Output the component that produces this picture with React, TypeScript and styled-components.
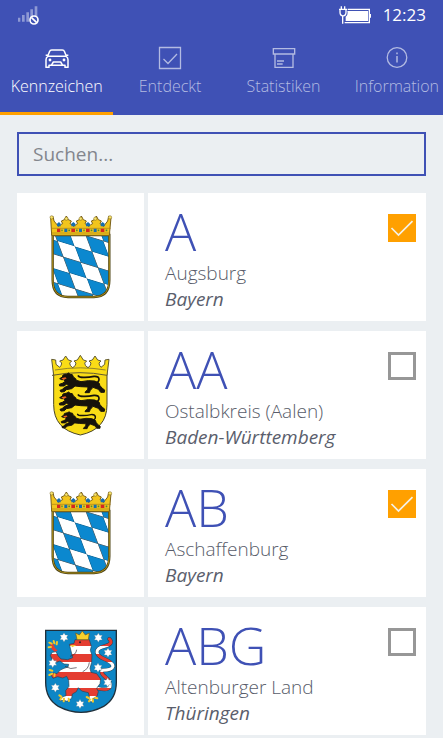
import React, { useState } from "react";
import styled, { createGlobalStyle } from "styled-components";

const indigo = "#3f51b5";
const amber = "#ffa000";

const GlobalStyle = createGlobalStyle`
  *, *::before, *::after { box-sizing: border-box; }
  body {
    margin: 0;
    background: #ebeff2;
    font-family: "Open Sans", "Noto Sans", sans-serif;
    overflow-x: hidden;
  }
  button, input { font: inherit; }
`;

const Header = styled.header`
  background: ${indigo};
  color: #fff;
`;

const StatusBar = styled.div`
  display: flex;
  align-items: center;
  justify-content: space-between;
  height: 30px;
  padding: 0 17px;
`;

const StatusRight = styled.div`
  display: flex;
  align-items: center;
  gap: 12px;
  svg { display: block; }
`;

const Clock = styled.time`
  font-size: 17px;
  line-height: 28px;
  font-weight: 400;
`;

const Tabs = styled.nav`
  display: flex;
  overflow: hidden;
`;

const Tab = styled.button<{ $active: boolean }>`
  flex: 0 0 25.6%;
  display: flex;
  flex-direction: column;
  align-items: center;
  height: 85px;
  padding: 15px 0 0;
  border: 0;
  border-bottom: 3px solid ${(p) => (p.$active ? amber : "transparent")};
  background: none;
  color: ${(p) => (p.$active ? "#ffffff" : "#b3bbe2")};
  font-size: 16px;
  line-height: 24px;
  font-weight: 300;
  white-space: nowrap;
  cursor: pointer;
`;

const TabIcon = styled.span`
  display: grid;
  place-items: center;
  height: 26px;
  margin-bottom: 3px;
  svg { display: block; }
`;

const Main = styled.main`
  padding: 17px 17px 2px;
`;

const Search = styled.input`
  display: block;
  width: 100%;
  height: 44px;
  padding: 0 14px;
  border: 2px solid ${indigo};
  border-radius: 0;
  outline: 0;
  background: transparent;
  color: #5b5f6b;
  font-size: 19px;
  &::placeholder { color: #83868d; opacity: 1; }
`;

const List = styled.ul`
  display: flex;
  flex-direction: column;
  gap: 10px;
  margin: 17px 0 0;
  padding: 0;
  list-style: none;
`;

const Row = styled.li`
  display: grid;
  grid-template-columns: 127px 1fr;
  gap: 4px;
  min-height: 128px;
`;

const Crest = styled.div`
  display: grid;
  place-items: center;
  background: #fff;
  svg { display: block; }
`;

const Card = styled.div`
  display: flex;
  justify-content: space-between;
  align-items: flex-start;
  padding: 9px 10px 9px 17px;
  background: #fff;
`;

const Code = styled.h2`
  margin: 0;
  color: ${indigo};
  font-size: 52px;
  line-height: 58px;
  font-weight: 300;
`;

const Place = styled.p`
  margin: 0;
  color: #585c6a;
  font-size: 19px;
  line-height: 26px;
  font-weight: 300;
`;

const State = styled(Place)`
  color: #5a5e6c;
  font-style: italic;
  font-weight: 400;
`;

const CheckWrap = styled.label`
  display: grid;
  margin-top: 12px;
  cursor: pointer;
  & > * { grid-area: 1 / 1; }
  svg { display: block; pointer-events: none; }
`;

const CheckInput = styled.input`
  appearance: none;
  width: 28px;
  height: 28px;
  margin: 0;
  border: 3px solid #979797;
  background: #fff;
  cursor: pointer;
  &:checked { border-color: ${amber}; background: ${amber}; }
`;

const SignalIcon = () => (
  <svg width="22" height="20" viewBox="51 16 66 60" aria-label="Kein Netz">
    <g fill="#8e99d4">
      <path d="M54 54h7v12h-7zM66 46h8v20h-8zM79 38h8v28h-8zM91 29h8v37h-8zM104 20h8v46h-8z" />
    </g>
    <circle cx="102" cy="61" r="12" fill={indigo} stroke="#fff" strokeWidth="5" />
    <path d="M94 53l16 16" stroke="#fff" strokeWidth="5" />
  </svg>
);

const BatteryIcon = () => (
  <svg width="32" height="18" viewBox="358 14 96 54" aria-label="Akku wird geladen">
    <path d="M384 24h65v40h-74" fill="none" stroke="#fff" strokeWidth="4" />
    <path d="M383 29h62v30h-67v-13c5-3 7-9 5-17z" fill="#fff" />
    <path d="M450 38h5v11h-5z" fill="#fff" />
    <path d="M365 15v9M375 15v9M369 44v23" stroke="#fff" strokeWidth="4" />
    <path d="M358 24h24M361 24v9c0 14 18 14 18 0v-9" fill={indigo} stroke="#fff" strokeWidth="4" />
  </svg>
);

const CarIcon = () => (
  <svg width="24" height="20" viewBox="136 146 72 60" fill="none" stroke="currentColor" strokeWidth="4.5" strokeLinejoin="round">
    <path d="M144 171l6-15q1-4 6-4h32q5 0 6 4l6 15" />
    <path d="M138 168h7M199 168h7M145 171h54q6 3 6 10v23h-9v-6h-48v6h-9v-23q0-7 6-10z" />
    <path d="M155 198l6-10h22l6 10" />
    <circle cx="151" cy="182" r="2" fill="currentColor" />
    <circle cx="193" cy="182" r="2" fill="currentColor" />
  </svg>
);

const CheckBoxIcon = () => (
  <svg width="24" height="24" viewBox="0 0 24 24" fill="none" stroke="currentColor">
    <path d="M1.5 1.5h21v21h-21z" strokeWidth="1.3" />
    <path d="M5.500 13l4.500 4.500 9-9.500" strokeWidth="1.3" />
  </svg>
);

const ArchiveIcon = () => (
  <svg width="24" height="24" viewBox="154 136 72 72" fill="none" stroke="currentColor" strokeWidth="4">
    <path d="M158 144h64v16h-64zM163 160v40h54v-40M169 181h21M169 190h17" />
  </svg>
);

const InfoIcon = () => (
  <svg width="24" height="24" viewBox="0 0 24 24" fill="none" stroke="currentColor" strokeWidth="1.3">
    <circle cx="12" cy="11.500" r="9.800" />
    <path d="M12 10v6.500M12 6.500v1.700" strokeWidth="1.500" />
  </svg>
);

const Tick = () => (
  <svg width="28" height="28" viewBox="0 0 28 28" fill="none" stroke="#f4f1e8" strokeWidth="1.700">
    <path d="M3.500 14l7 7L24.500 7.200" />
  </svg>
);

const BavariaCrest = ({ id }: { id: string }) => (
  <svg width="64" height="84" viewBox="55 58 192 252" role="img" aria-label="Wappen Bayern">
    <defs>
      <pattern id={id} width="2" height="2" patternUnits="userSpaceOnUse" patternTransform="matrix(52 16 18 48 132 152)">
        <path d="M0 0h2v2H0z" fill="#fff" />
        <path d="M0 0h1v1H0zM1 1h1v1H1z" fill="#0b88cf" stroke="#30464f" strokeWidth=".04" />
      </pattern>
    </defs>
    <path d="M66 118h170v136q0 50-46 50h-78q-46 0-46-50z" fill={`url(#${id})`} stroke="#4e4415" strokeWidth="7" />
    <path d="M66 118h170v136q0 50-46 50h-78q-46 0-46-50z" fill="none" stroke="#a98c18" strokeWidth="3" />
    <path d="M63 119L60 66l7-4 3 14 14 17q6-8 12-9l-4-8 9-4 6-11 6 11 9 4-4 8q7 2 11 9 5-7 12-9l-4-8 9-4 6-11 6 11 9 4-4 8q7 2 11 9 5-7 12-9l-4-8 9-4 6-11 6 11 9 4-4 8q6 2 10 9l13-17 3-14 7 4-5 53z" fill="#f2c51d" stroke="#79601a" strokeWidth="3" strokeLinejoin="round" />
    <path d="M62 98h178M63 112h176" stroke="#a77d16" strokeWidth="2" />
    <g fill="#176eae">
      <path d="M101 99h9v10h-9zM145 99h9v10h-9zM189 99h9v10h-9z" />
      <path d="M79 84l6-5 5 5v8H79zM122 84l6-5 6 5v8h-12zM166 84l6-5 6 5v8h-12zM210 84l6-5 6 5v8h-12z" />
    </g>
    <path d="M79 99h10v10H79zM122 99h11v10h-11zM166 99h11v10h-11zM210 99h11v10h-11z" fill="#d5271e" />
    <path d="M92 104h4M113 104h5M136 104h5M158 104h4M180 104h5M201 104h5M225 104h5" stroke="#4f8a34" strokeWidth="5" />
    <g fill="#f7e36c" stroke="#79601a" strokeWidth="1.500">
      <circle cx="63" cy="65" r="5" /><circle cx="107" cy="69" r="5" /><circle cx="150" cy="69" r="5" /><circle cx="194" cy="69" r="5" /><circle cx="238" cy="65" r="5" />
    </g>
  </svg>
);

const lionPath =
  "M88 130l8-5 2-6 12-3 5-3 4 4 7 1 3 7 7 5 2 5 14 4 22-3 19 1 13 6 3 8 7 8 7 5-1 7-11 0-7-9-16-6-8 9-3 7-13 0 3-5 5-3 1-9-22-1-17-2-10 8-16 3-6 6-10 1-3-5 6-2 8-7 14-6-9-3-7 5-13 0-1-5 9-3 8-5-3-6-7 0z";

const BadenCrest = () => (
  <svg width="64" height="84" viewBox="56 54 192 252" role="img" aria-label="Wappen Baden-Württemberg">
    <path d="M70 103q80-10 160 0v106q0 74-80 91-80-17-80-91z" fill="#f9dc16" stroke="#494526" strokeWidth="3" />
    <path d="M70 121L64 73l12 2 1 13 11 9q6-6 6-13l-6-6 10-3 8-12 8 12 10 3-6 6q0 9 9 14 10-5 10-14l-6-6 10-3 9-14 9 14 10 3-6 6q0 9 10 14 9-5 9-14l-6-6 10-3 8-12 8 12 10 3-6 6q0 7 6 13l11-9 1-13 12-2-6 48q-80-16-164 0z" fill="#f9dc16" stroke="#625b32" strokeWidth="3" strokeLinejoin="round" />
    <path d="M74 105q76-13 152 0" fill="none" stroke="#625b32" strokeWidth="2" />
    {["translate(0 1)", "translate(0 58)", "translate(18 133) scale(.86)"].map((t) => (
      <g key={t} transform={t}>
        <path d={lionPath} fill="#17130b" stroke="#17130b" strokeWidth="3" strokeLinejoin="round" />
        <path d="M190 145q17-3 16-14-1-9-15-8-15 3-27 3-17 1-20-4" fill="none" stroke="#17130b" strokeWidth="5" strokeLinecap="round" />
        <path d="M93 129l12-3 4 3-9 5z" fill="#ee6325" />
      </g>
    ))}
  </svg>
);

const stripeEdges = [62, 110, 134, 158, 187, 212, 236, 259, 310];
const stars = [[102, 83], [205, 84], [234, 129], [68, 160], [204, 174], [76, 234], [233, 218], [150, 283]];
const thuringiaTail = "M238 88q14 14-12 21-26 6-25 19 2 12 22 20 25 10 26 22-2 12-33 12-4 10 10 20 18 14 14 29-7 13-36 5";
const thuringiaLion =
  "M118 104l14-3 3-11 43 0 6 20-3 12 5 14-1 22-5 18 3 12 17 4 12 16-2 14-10 14 5 10-4 14-11 6-4 11-10-2 2-14-3-12-20-5-10-10-6 12-12 7-2 13-14 9-9-3-11 1-3-6 14-7 6-2-1-15 10-13-1-18-6-12-12 5-15-4-14 5-6-10 7-6 11 2 10-11 11-5 12-4 2-8-14-1-12-9-14 5-9-8-6-14 6-9 11-2 6 12 9 10 20 2 15-6z";

const ThuringiaCrest = () => (
  <svg width="72" height="84" viewBox="45 58 216 252" role="img" aria-label="Wappen Thüringen">
    <defs>
      <linearGradient id="stripes" gradientUnits="userSpaceOnUse" x1="0" y1="62" x2="0" y2="310">
        {stripeEdges.slice(0, -1).map((y, i) => (
          <React.Fragment key={y}>
            <stop offset={(y - 62) / 248} stopColor={i % 2 ? "#ffffff" : "#e43d31"} />
            <stop offset={(stripeEdges[i + 1] - 62) / 248} stopColor={i % 2 ? "#ffffff" : "#e43d31"} />
          </React.Fragment>
        ))}
      </linearGradient>
    </defs>
    <path d="M47 62h212v156q0 50-38 72-34 18-68 18t-68-18q-38-22-38-72z" fill="#0d86c6" stroke="#20303b" strokeWidth="4" />
    <path d={thuringiaTail} fill="none" stroke="#274254" strokeWidth="12" strokeLinecap="round" />
    <path d={thuringiaTail} fill="none" stroke="url(#stripes)" strokeWidth="9" strokeLinecap="round" />
    <path d={thuringiaLion} fill="url(#stripes)" stroke="#274254" strokeWidth="2" strokeLinejoin="round" />
    <path d="M60 104l9-2 6 13 8 8-9 3-9-7z" fill="#e43d31" />
    <path d="M105 170q17 11 35 4M140 120q-2 16-20 20M178 158q-2 20-20 28" fill="none" stroke="#36303a" strokeWidth="2" />
    <path d="M58 99l7 3M71 94l2 7M56 113l7-1M81 97l-1 7M59 181l8 2M58 196l9-4M73 199l1-5M88 257l6 4M91 269l4-5M101 275l1-8M117 274l-1-7M170 262l6 3M177 275l3-6M189 276l-1-8M202 266l-7-2" fill="none" stroke="#f0c82b" strokeWidth="6" strokeLinecap="round" />
    <path d="M141 90l-4-20 11 6 9-12 9 12 12-6-3 20z" fill="#f8d12b" stroke="#6e581e" strokeWidth="2" />
    <path d="M120 106l19 0-12 7z" fill="#f4c632" />
    <circle cx="150" cy="98" r="3" fill="#2f2525" />
    {stars.map(([x, y]) => (
      <path key={`${x}-${y}`} transform={`translate(${x} ${y})`} d="M0-14L4-7 12-7 8 0 12 7 4 7 0 14-4 7-12 7-8 0-12-7-4-7z" fill="#fff" stroke="#51778b" strokeWidth="1" />
    ))}
  </svg>
);

const tabs = [
  { name: "Kennzeichen", icon: <CarIcon /> },
  { name: "Entdeckt", icon: <CheckBoxIcon /> },
  { name: "Statistiken", icon: <ArchiveIcon /> },
  { name: "Information", icon: <InfoIcon /> },
];

const plates = [
  { code: "A", place: "Augsburg", state: "Bayern", crest: <BavariaCrest id="lozenges-a" />, found: true },
  { code: "AA", place: "Ostalbkreis (Aalen)", state: "Baden-Württemberg", crest: <BadenCrest />, found: false },
  { code: "AB", place: "Aschaffenburg", state: "Bayern", crest: <BavariaCrest id="lozenges-ab" />, found: true },
  { code: "ABG", place: "Altenburger Land", state: "Thüringen", crest: <ThuringiaCrest />, found: false },
];

const FoundBox = ({ code, initial }: { code: string; initial: boolean }) => {
  const [checked, setChecked] = useState(initial);
  return (
    <CheckWrap>
      <CheckInput
        type="checkbox"
        aria-label={`${code} entdeckt`}
        checked={checked}
        onChange={(e) => setChecked(e.target.checked)}
      />
      {checked && <Tick />}
    </CheckWrap>
  );
};

export default function App() {
  const [active, setActive] = useState("Kennzeichen");
  return (
    <>
      <GlobalStyle />
      <Header>
        <StatusBar>
          <SignalIcon />
          <StatusRight>
            <BatteryIcon />
            <Clock>12:23</Clock>
          </StatusRight>
        </StatusBar>
        <Tabs>
          {tabs.map((t) => (
            <Tab key={t.name} type="button" $active={t.name === active} onClick={() => setActive(t.name)}>
              <TabIcon>{t.icon}</TabIcon>
              {t.name}
            </Tab>
          ))}
        </Tabs>
      </Header>
      <Main>
        <Search type="search" placeholder="Suchen..." aria-label="Suchen" />
        <List>
          {plates.map((p) => (
            <Row key={p.code}>
              <Crest>{p.crest}</Crest>
              <Card>
                <div>
                  <Code>{p.code}</Code>
                  <Place>{p.place}</Place>
                  <State>{p.state}</State>
                </div>
                <FoundBox code={p.code} initial={p.found} />
              </Card>
            </Row>
          ))}
        </List>
      </Main>
    </>
  );
}
